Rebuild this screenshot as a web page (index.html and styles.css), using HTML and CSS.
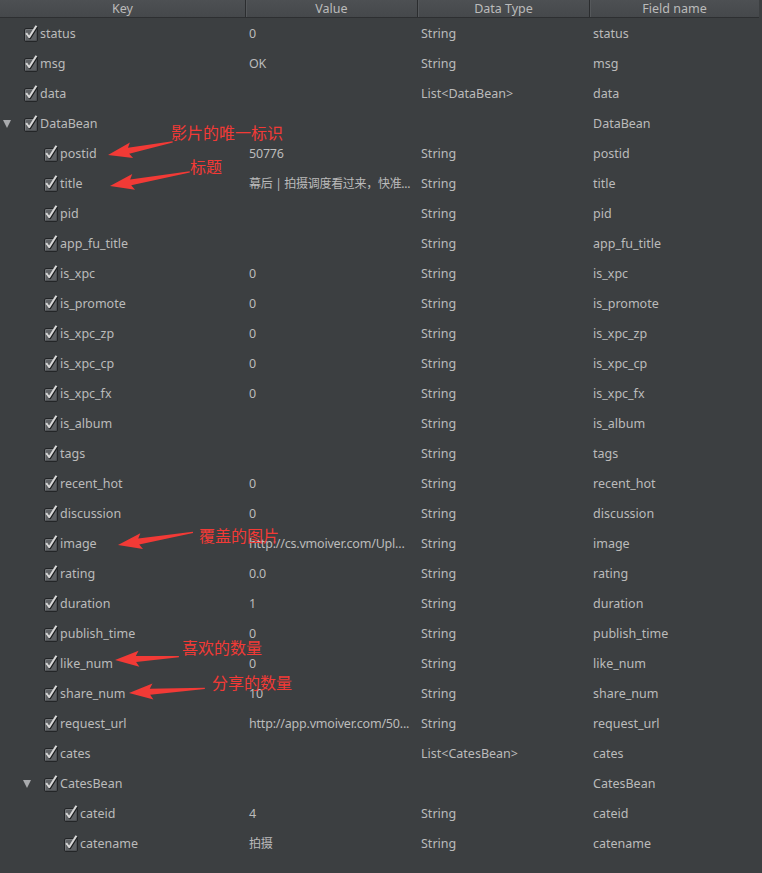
FILE: index.html
```html
<!DOCTYPE html>
<html lang="zh">
<head>
<meta charset="utf-8">
<title>GsonFormat</title>
<link rel="stylesheet" href="styles.css">
</head>
<body>
<div class="panel">
  <div class="head">
    <div class="hcell">Key</div>
    <div class="hcell">Value</div>
    <div class="hcell">Data Type</div>
    <div class="hcell">Field name</div>
  </div>
  <div class="rows" id="rows"></div>

  <div class="note n1">影片的唯一标识</div>
  <div class="note n2">标题</div>
  <div class="note n3">覆盖的图片</div>
  <div class="note n4">喜欢的数量</div>
  <div class="note n5">分享的数量</div>
  <svg class="arrows" width="762" height="873" viewBox="0 0 762 873">
    <g fill="#f23a36">
      <polygon transform="translate(108 155) rotate(-11.5)" points="0,0 24,-8 21,-3 66,-0.6 66,0.6 21,3 24,8"/>
      <polygon transform="translate(110 186) rotate(-10)" points="0,0 24,-8 21,-3 81,-0.6 81,0.6 21,3 24,8"/>
      <polygon transform="translate(118 545) rotate(-9.5)" points="0,0 24,-8 21,-3 76,-0.6 76,0.6 21,3 24,8"/>
      <polygon transform="translate(115 660) rotate(-3)" points="0,0 24,-8 21,-3 64,-0.6 64,0.6 21,3 24,8"/>
      <polygon transform="translate(129 693) rotate(-3.5)" points="0,0 24,-8 21,-3 76,-0.6 76,0.6 21,3 24,8"/>
    </g>
  </svg>
</div>
<script src="app.js"></script>
</body>
</html>
```
FILE: app.js
```js
var data = [
  [0,0,"status","0","String","status"],
  [0,0,"msg","OK","String","msg"],
  [0,0,"data","","List<DataBean>","data"],
  [0,1,"DataBean","","","DataBean"],
  [1,0,"postid","50776","String","postid"],
  [1,0,"title","幕后 | 拍摄调度看过来，快准...","String","title"],
  [1,0,"pid","","String","pid"],
  [1,0,"app_fu_title","","String","app_fu_title"],
  [1,0,"is_xpc","0","String","is_xpc"],
  [1,0,"is_promote","0","String","is_promote"],
  [1,0,"is_xpc_zp","0","String","is_xpc_zp"],
  [1,0,"is_xpc_cp","0","String","is_xpc_cp"],
  [1,0,"is_xpc_fx","0","String","is_xpc_fx"],
  [1,0,"is_album","","String","is_album"],
  [1,0,"tags","","String","tags"],
  [1,0,"recent_hot","0","String","recent_hot"],
  [1,0,"discussion","0","String","discussion"],
  [1,0,"image","http://cs.vmoiver.com/Upl...","String","image"],
  [1,0,"rating","0.0","String","rating"],
  [1,0,"duration","1","String","duration"],
  [1,0,"publish_time","0","String","publish_time"],
  [1,0,"like_num","0","String","like_num"],
  [1,0,"share_num","10","String","share_num"],
  [1,0,"request_url","http://app.vmoiver.com/50...","String","request_url"],
  [1,0,"cates","","List<CatesBean>","cates"],
  [1,1,"CatesBean","","","CatesBean"],
  [2,0,"cateid","4","String","cateid"],
  [2,0,"catename","拍摄","String","catename"]
];
var box = '<span class="cb"><svg class="tick" width="14" height="15" viewBox="0 0 14 15">' +
  '<path d="M2.2 8.2 L5.2 12.2 L12.4 0.8" fill="none" stroke="#1c1e1f" stroke-width="2.4" stroke-linejoin="round" transform="translate(0.7 0.9)"/>' +
  '<path d="M2.2 8.2 L5.2 12.2 L12.4 0.8" fill="none" stroke="#d6d6d6" stroke-width="2.1" stroke-linejoin="round"/>' +
  '</svg></span>';
function esc(s){return s.replace(/&/g,"&amp;").replace(/</g,"&lt;").replace(/>/g,"&gt;");}
var html = "";
data.forEach(function(r){
  var cjk = /[\u4e00-\u9fff]/.test(r[3]) ? " cjk" : "";
  html += '<div class="row">' +
    '<div class="cell key lvl' + r[0] + '">' +
      '<span class="twisty">' + (r[1] ? '<span class="tri"></span>' : '') + '</span>' +
      box + '<span class="ktext">' + esc(r[2]) + '</span></div>' +
    '<div class="cell val' + cjk + '">' + esc(r[3]) + '</div>' +
    '<div class="cell">' + esc(r[4]) + '</div>' +
    '<div class="cell">' + esc(r[5]) + '</div>' +
  '</div>';
});
document.getElementById("rows").innerHTML = html;
```
FILE: styles.css
```css
html, body {
  margin: 0;
  padding: 0;
  background: #3c3f41;
}
body {
  font-family: "Noto Sans", "Noto Sans CJK SC", sans-serif;
  font-size: 12.5px;
  color: #bbbbbb;
}
.panel {
  position: relative;
  width: 762px;
  height: 873px;
  overflow: hidden;
  background: #3c3f41;
}
.head {
  display: grid;
  grid-template-columns: 245px 172px 172px 1fr;
  height: 17px;
  background: linear-gradient(#4d5053, #45484b);
  border-bottom: 1px solid #2d2f31;
  margin-right: 3px;
}
.hcell {
  display: flex;
  align-items: center;
  justify-content: center;
  line-height: 17px;
  color: #bbbbbb;
  border-left: 1px solid #2b2d2f;
  box-shadow: inset 1px 0 0 #55585b;
}
.hcell:first-child {
  border-left: none;
  box-shadow: none;
}
.rows {
  display: flex;
  flex-direction: column;
}
.row {
  display: grid;
  grid-template-columns: 245px 172px 172px 1fr;
  height: 30px;
  align-items: center;
}
.cell {
  padding-left: 4px;
  white-space: nowrap;
  overflow: hidden;
}
.val {
  letter-spacing: -0.2px;
}
.val.cjk {
  font-size: 12px;
  letter-spacing: -0.3px;
}
.key {
  display: flex;
  align-items: center;
  padding-left: 3px;
  padding-top: 4px;
  padding-bottom: 4px;
}
.key.lvl1 { padding-left: 23px; }
.key.lvl2 { padding-left: 43px; }
.twisty {
  width: 21px;
  flex: none;
  display: flex;
  align-items: center;
}
.tri {
  width: 0;
  height: 0;
  border-left: 4.5px solid transparent;
  border-right: 4.5px solid transparent;
  border-top: 8px solid #a9abad;
  margin-top: 2px;
}
.cb {
  display: block;
  position: relative;
  flex: none;
  box-sizing: border-box;
  width: 14px;
  height: 14px;
  margin-top: 3px;
  margin-right: 2px;
  border: 1px solid #232527;
  border-radius: 2px;
  background: #5f6265;
  box-shadow: inset 1px 1px 0 #74777a, inset -1px -1px 0 #4e5154;
}
.tick {
  position: absolute;
  left: -1px;
  top: -4px;
}
.note {
  position: absolute;
  color: #f23a36;
  font-family: "Noto Sans CJK SC", sans-serif;
  font-size: 16px;
  line-height: 18px;
  white-space: nowrap;
}
.n1 { left: 171px; top: 123px; }
.n2 { left: 190px; top: 157px; }
.n3 { left: 199px; top: 526px; }
.n4 { left: 182px; top: 638px; }
.n5 { left: 212px; top: 673px; }
.arrows {
  position: absolute;
  left: 0;
  top: 0;
  pointer-events: none;
}
```
